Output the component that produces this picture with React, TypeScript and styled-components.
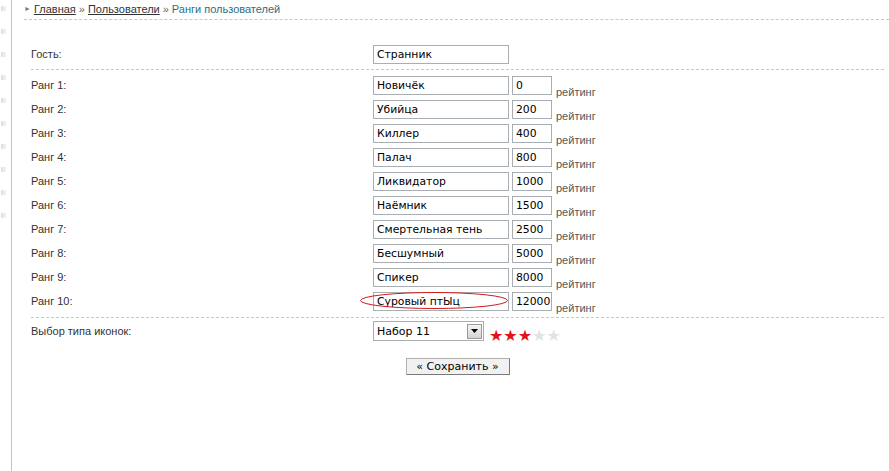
import styled, { createGlobalStyle } from 'styled-components'

const GlobalStyle = createGlobalStyle`
  html, body {
    margin: 0;
    padding: 0;
    background: #ffffff;
  }
  body {
    font-family: "Liberation Sans", Arial, sans-serif;
    font-size: 11px;
    color: #333333;
  }
`

const Page = styled.div`
  display: flex;
  min-height: 471px;
`

const Sidebar = styled.div`
  width: 12px;
  flex-shrink: 0;
  border-right: 1px solid #c4c4c4;
  display: flex;
  flex-direction: column;
  gap: 18px;
  padding-top: 6px;
  box-sizing: border-box;
`

const SideDot = styled.span`
  display: block;
  width: 5px;
  height: 5px;
  margin-left: 1px;
  background: linear-gradient(90deg, #cfe6f2 0 50%, #f2efd8 50% 100%);
  border-radius: 1px;
`

const Content = styled.div`
  flex: 1;
  min-width: 0;
  padding-left: 12px;
`

const Breadcrumbs = styled.div`
  display: flex;
  align-items: center;
  height: 20px;
  border-bottom: 1px dashed #c8c8c8;
  box-sizing: border-box;
  line-height: 13px;
`

const Arrow = styled.span`
  color: #8a7b5a;
  font-size: 7px;
  margin-right: 3px;
  margin-top: -2px;
`

const Crumb = styled.a`
  color: #333333;
  text-decoration: underline;
`

const Sep = styled.span`
  color: #666666;
  margin: 0 3px;
`

const Current = styled.span`
  color: #2d6e7e;
`

const Form = styled.div`
  margin: 22px 5px 0 7px;
`

const Row = styled.div`
  display: grid;
  grid-template-columns: 342px 1fr;
  align-items: center;
  height: 24px;
`

const Divider = styled.div<{ $top: number; $bottom: number }>`
  border-top: 1px dashed #c8c8c8;
  margin: ${(p) => p.$top}px 0 ${(p) => p.$bottom}px;
`

const Label = styled.span`
  color: #333333;
`

const Field = styled.div`
  display: flex;
  align-items: flex-end;
  gap: 3px;
`

const Input = styled.div<{ $w: number }>`
  position: relative;
  width: ${(p) => p.$w}px;
  height: 19px;
  border: 1px solid #a9aeb3;
  box-sizing: border-box;
  padding: 0 2px 0 3px;
  font-family: "DejaVu Sans", Verdana, sans-serif;
  font-size: 10.8px;
  line-height: 17px;
  color: #000000;
  background: #ffffff;
  white-space: nowrap;
`

const Unit = styled.span`
  color: #555555;
  margin-left: 1px;
  line-height: 11px;
  margin-bottom: -3px;
`

const Circle = styled.svg`
  position: absolute;
  left: -15px;
  top: -2px;
  pointer-events: none;
`

const Select = styled.div`
  display: flex;
  align-items: center;
  width: 111px;
  height: 20px;
  border: 1px solid #a9aeb3;
  box-sizing: border-box;
  padding: 0 1px 0 3px;
  font-family: "DejaVu Sans", Verdana, sans-serif;
  font-size: 11px;
  color: #000000;
`

const SelectText = styled.span`
  flex: 1;
`

const SelectButton = styled.span`
  width: 15px;
  height: 15px;
  box-sizing: border-box;
  border: 1px solid #9a9a9a;
  background: linear-gradient(#f4f4f4, #d4d4d4);
  display: flex;
  align-items: center;
  justify-content: center;
`

const Stars = styled.span`
  display: flex;
  margin-left: 2px;
  font-family: "DejaVu Sans", sans-serif;
  font-size: 16px;
  line-height: 16px;
  margin-bottom: -3px;
`

const Star = styled.span<{ $on: boolean }>`
  color: ${(p) => (p.$on ? '#e3131b' : '#e2e2e2')};
`

const ButtonRow = styled.div`
  display: flex;
  justify-content: center;
  margin-top: 15px;
`

const SaveButton = styled.button`
  width: 104px;
  height: 17px;
  padding: 0;
  border: 1px solid #7a7a7a;
  border-top-color: #b0b0b0;
  border-left-color: #b0b0b0;
  background: #f1f1f1;
  font-family: "DejaVu Sans", Verdana, sans-serif;
  font-size: 11px;
  line-height: 14px;
  color: #000000;
`

const ranks = [
  ['Новичёк', '0'],
  ['Убийца', '200'],
  ['Киллер', '400'],
  ['Палач', '800'],
  ['Ликвидатор', '1000'],
  ['Наёмник', '1500'],
  ['Смертельная тень', '2500'],
  ['Бесшумный', '5000'],
  ['Спикер', '8000'],
  ['Суровый птЫц', '12000'],
]

export default function App() {
  return (
    <>
      <GlobalStyle />
      <Page>
        <Sidebar>
          {Array.from({ length: 10 }).map((_, i) => (
            <SideDot key={i} />
          ))}
        </Sidebar>
        <Content>
          <Breadcrumbs>
            <Arrow>►</Arrow>
            <Crumb>Главная</Crumb>
            <Sep>»</Sep>
            <Crumb>Пользователи</Crumb>
            <Sep>»</Sep>
            <Current>Ранги пользователей</Current>
          </Breadcrumbs>
          <Form>
            <Row>
              <Label>Гость:</Label>
              <Field>
                <Input $w={136}>Странник</Input>
              </Field>
            </Row>
            <Divider $top={3} $bottom={3} />
            {ranks.map(([name, value], i) => (
              <Row key={name}>
                <Label>Ранг {i + 1}:</Label>
                <Field>
                  <Input $w={136}>
                    {name}
                    {i === 9 && (
                      <Circle width="150" height="19" viewBox="0 0 150 19">
                        <ellipse cx="75" cy="9.5" rx="73.5" ry="8" fill="none" stroke="#d21a1a" strokeWidth="1" />
                      </Circle>
                    )}
                  </Input>
                  <Input $w={40}>{value}</Input>
                  <Unit>рейтинг</Unit>
                </Field>
              </Row>
            ))}
            <Divider $top={4} $bottom={1} />
            <Row>
              <Label>Выбор типа иконок:</Label>
              <Field>
                <Select>
                  <SelectText>Набор 11</SelectText>
                  <SelectButton>
                    <svg width="7" height="4" viewBox="0 0 7 4">
                      <path d="M0 0h7L3.5 4z" fill="#000" />
                    </svg>
                  </SelectButton>
                </Select>
                <Stars>
                  {[0, 1, 2, 3, 4].map((s) => (
                    <Star key={s} $on={s < 3}>★</Star>
                  ))}
                </Stars>
              </Field>
            </Row>
            <ButtonRow>
              <SaveButton>« Сохранить »</SaveButton>
            </ButtonRow>
          </Form>
        </Content>
      </Page>
    </>
  )
}
